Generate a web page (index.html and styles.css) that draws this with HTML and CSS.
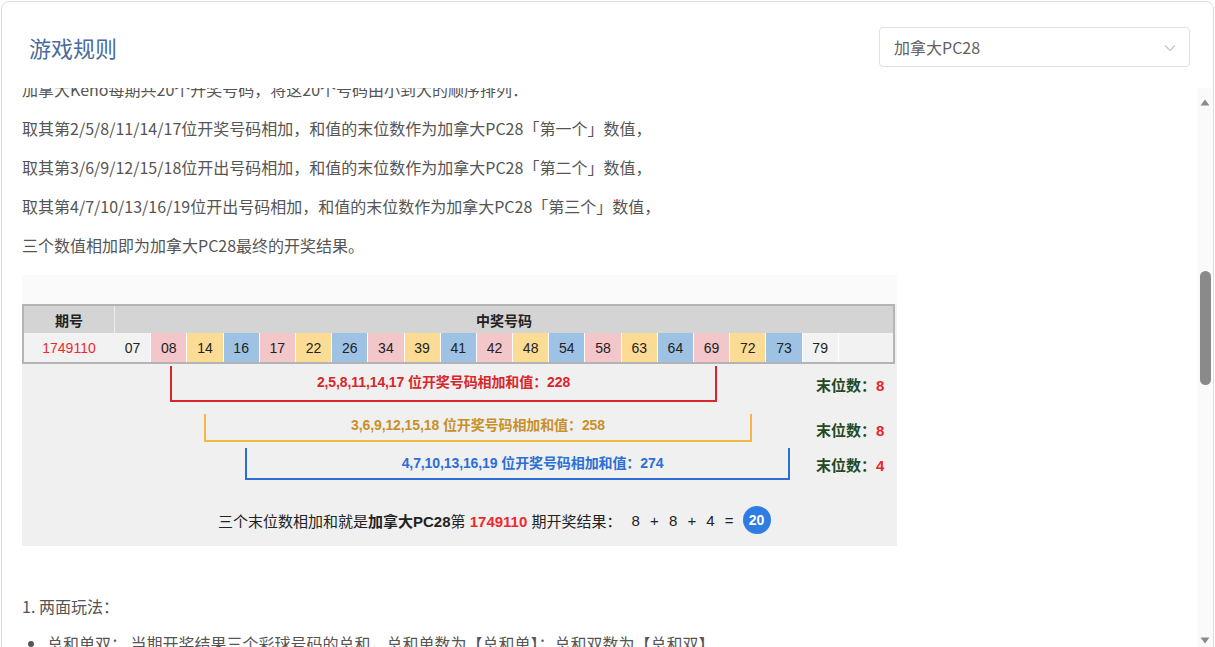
FILE: index.html
```html
<!DOCTYPE html>
<html lang="zh-CN">
<head>
    <meta charset="UTF-8">
    <meta name="viewport" content="width=device-width, initial-scale=1.0">
    <title>游戏规则 - 加拿大PC28</title>
    <link rel="stylesheet" href="styles.css">
</head>
<body>
    <div class="card">
        <div class="card-header">
            <h2 class="title">游戏规则</h2>
            <div class="select">
                <span>加拿大PC28</span>
                <svg class="chevron" width="12" height="8" viewBox="0 0 12 8"><path d="M1 1.5 L6 6.5 L11 1.5" fill="none" stroke="#c0c4cc" stroke-width="1.2"/></svg>
            </div>
        </div>

        <div class="card-body">
            <div class="rules">
                <div class="rules-inner">
                    <p>加拿大Keno每期共20个开奖号码，将这20个号码由小到大的顺序排列：</p>
                    <p>取其第2/5/8/11/14/17位开奖号码相加，和值的末位数作为加拿大PC28「第一个」数值，</p>
                    <p>取其第3/6/9/12/15/18位开出号码相加，和值的末位数作为加拿大PC28「第二个」数值，</p>
                    <p>取其第4/7/10/13/16/19位开出号码相加，和值的末位数作为加拿大PC28「第三个」数值，</p>
                    <p>三个数值相加即为加拿大PC28最终的开奖结果。</p>

                    <div class="figure">
                        <div class="figure-top"></div>
                        <div class="draw-table">
                            <div class="draw-head">
                                <div class="col-issue">期号</div>
                                <div class="col-nums">中奖号码</div>
                            </div>
                            <div class="draw-row">
                                <div class="col-issue issue-no">1749110</div>
                                <div class="cell">07</div>
                                <div class="cell pink">08</div>
                                <div class="cell yellow">14</div>
                                <div class="cell blue">16</div>
                                <div class="cell pink">17</div>
                                <div class="cell yellow">22</div>
                                <div class="cell blue">26</div>
                                <div class="cell pink">34</div>
                                <div class="cell yellow">39</div>
                                <div class="cell blue">41</div>
                                <div class="cell pink">42</div>
                                <div class="cell yellow">48</div>
                                <div class="cell blue">54</div>
                                <div class="cell pink">58</div>
                                <div class="cell yellow">63</div>
                                <div class="cell blue">64</div>
                                <div class="cell pink">69</div>
                                <div class="cell yellow">72</div>
                                <div class="cell blue">73</div>
                                <div class="cell">79</div>
                            </div>
                        </div>

                        <div class="sum-row row-red">
                            <div class="bracket">2,5,8,11,14,17 位开奖号码相加和值：228</div>
                            <div class="tail">末位数：<em>8</em></div>
                        </div>
                        <div class="sum-row row-yellow">
                            <div class="bracket">3,6,9,12,15,18 位开奖号码相加和值：258</div>
                            <div class="tail">末位数：<em>8</em></div>
                        </div>
                        <div class="sum-row row-blue">
                            <div class="bracket">4,7,10,13,16,19 位开奖号码相加和值：274</div>
                            <div class="tail">末位数：<em>4</em></div>
                        </div>

                        <div class="result">
                            <span>三个末位数相加和就是<b>加拿大PC28</b>第 <span class="red">1749110</span> 期开奖结果：</span>
                            <span class="formula">8 + 8 + 4 =</span>
                            <span class="ball">20</span>
                        </div>
                    </div>

                    <p class="section">1. 两面玩法：</p>
                    <ul class="play-list">
                        <li>总和单双：&nbsp;当期开奖结果三个彩球号码的总和，总和单数为【总和单】；总和双数为【总和双】</li>
                        <li>总和大小：&nbsp;当期开奖结果三个彩球号码的总和，14至27为【总和大】；0至13为【总和小】</li>
                    </ul>
                </div>
            </div>

            <div class="scrollbar">
                <svg class="arrow" width="10" height="7" viewBox="0 0 10 7"><path d="M5 0.5 L9.5 6.5 L0.5 6.5 Z" fill="#8a8a8a"/></svg>
                <span class="thumb"></span>
                <svg class="arrow arrow-down" width="10" height="7" viewBox="0 0 10 7"><path d="M0.5 0.5 L9.5 0.5 L5 6.5 Z" fill="#8a8a8a"/></svg>
            </div>
        </div>
    </div>
</body>
</html>
```

FILE: styles.css
```css
html, body {
    margin: 0;
    padding: 0;
    background: #fff;
    overflow: hidden;
}
body {
    font-family: "Noto Sans CJK SC", "Noto Sans", sans-serif;
    color: #555;
}
.card {
    margin: 1px 0 0 1px;
    width: 1213px;
    height: 660px;
    box-sizing: border-box;
    border: 1px solid #dedede;
    border-radius: 8px;
    display: flex;
    flex-direction: column;
    overflow: hidden;
}
.card-header {
    display: flex;
    align-items: center;
    justify-content: space-between;
    padding: 25px 23px 21px 27px;
}
.title {
    margin: 0;
    font-size: 22px;
    font-weight: normal;
    color: #4a6b9b;
    line-height: 40px;
}
.select {
    width: 311px;
    height: 40px;
    box-sizing: border-box;
    border: 1px solid #dcdfe6;
    border-radius: 4px;
    display: flex;
    align-items: center;
    justify-content: space-between;
    padding: 0 13px 0 14px;
    font-size: 16px;
    color: #606266;
}
.chevron {
    margin-top: 1px;
}

.card-body {
    flex: 1;
    display: flex;
    min-height: 0;
}
.rules {
    flex: 1;
    overflow: hidden;
    padding-left: 20px;
}
.rules-inner {
    margin-top: -11px;
}
.rules p {
    margin: 0 0 15px;
    font-size: 16px;
    line-height: 24px;
    color: #555;
}

/* drawing explanation figure */
.figure {
    width: 875px;
    margin: 18px 0 48px;
    background: #f0f0f0;
    font-family: "Liberation Sans", "Noto Sans CJK SC", sans-serif;
    color: #222;
    padding-bottom: 12px;
}
.figure-top {
    height: 29px;
    background: #fafafa;
}
.draw-table {
    width: 873px;
    border: 2px solid #b4b4b4;
    box-sizing: border-box;
}
.draw-head {
    display: flex;
    height: 27px;
    background: #d4d4d4;
    font-weight: bold;
    font-size: 14px;
}
.draw-head .col-issue {
    border-right: 1px solid #ececec;
}
.col-issue {
    width: 90px;
    display: flex;
    align-items: center;
    justify-content: center;
}
.col-nums {
    flex: 1;
    display: flex;
    align-items: center;
    justify-content: center;
}
.draw-row {
    display: flex;
    height: 29px;
    background: #f2f2f2;
    font-size: 14px;
}
.issue-no {
    color: #f0282d;
    border-right: 1px solid #f2f2f2;
}
.cell {
    width: 36.2px;
    display: flex;
    align-items: center;
    justify-content: center;
    border-right: 1px solid #fff;
    box-sizing: border-box;
}
.pink { background: #f3c6ca; }
.yellow { background: #fcdc95; }
.blue { background: #9dc2e3; }

.sum-row {
    display: grid;
    grid-template-columns: 794px 1fr;
    align-items: center;
}
.bracket {
    border: 2px solid;
    border-top: none;
    box-sizing: border-box;
    font-size: 14px;
    font-weight: bold;
    text-align: center;
    letter-spacing: -0.1px;
}
.tail {
    font-size: 15px;
    font-weight: bold;
    color: #1f4a24;
}
.tail em {
    font-style: normal;
    color: #e5262b;
}
.row-red {
    margin-top: 2px;
}
.row-red .bracket {
    margin-left: 148px;
    width: 547px;
    height: 36px;
    padding-top: 5px;
    border-color: #d9262c;
    color: #d9262c;
}
.row-red .tail {
    padding-top: 1px;
}
.row-yellow {
    margin-top: 12px;
}
.row-yellow .bracket {
    margin-left: 182px;
    width: 548px;
    height: 28px;
    padding-top: 0;
    border-color: #f5b942;
    color: #c8902a;
}
.row-yellow .tail {
    padding-top: 2px;
}
.row-blue {
    margin-top: 6px;
}
.row-blue .bracket {
    margin-left: 223px;
    width: 545px;
    height: 32px;
    padding: 4px 0 0 30px;
    border-color: #2b6fd6;
    color: #2b6fd6;
}
.result {
    display: flex;
    align-items: center;
    margin-top: 26px;
    padding-left: 196px;
    font-size: 15px;
    color: #222;
}
.result b {
    font-weight: bold;
}
.result .red {
    color: #f0282d;
    font-weight: bold;
}
.formula {
    margin-left: 10px;
    word-spacing: 6px;
}
.ball {
    margin-left: 9px;
    width: 28px;
    height: 28px;
    border-radius: 50%;
    background: #2f7de1;
    color: #fff;
    font-weight: bold;
    font-size: 14px;
    display: flex;
    align-items: center;
    justify-content: center;
}

.rules p.section {
    margin-bottom: 13px;
}
.play-list {
    margin: 0;
    padding-left: 25px;
    font-size: 16px;
    line-height: 24px;
    color: #555;
}
.play-list li {
    margin-bottom: 13px;
}

/* scrollbar column */
.scrollbar {
    width: 16px;
    flex-shrink: 0;
    background: #fafafa;
    display: flex;
    flex-direction: column;
    align-items: center;
    padding-top: 11px;
    box-sizing: border-box;
}
.arrow {
    flex-shrink: 0;
    display: block;
}
.thumb {
    flex-shrink: 0;
    width: 11px;
    height: 114px;
    margin-top: 165px;
    border-radius: 6px;
    background: #8a8a8a;
}
.arrow-down {
    margin-top: 252px;
}
```
